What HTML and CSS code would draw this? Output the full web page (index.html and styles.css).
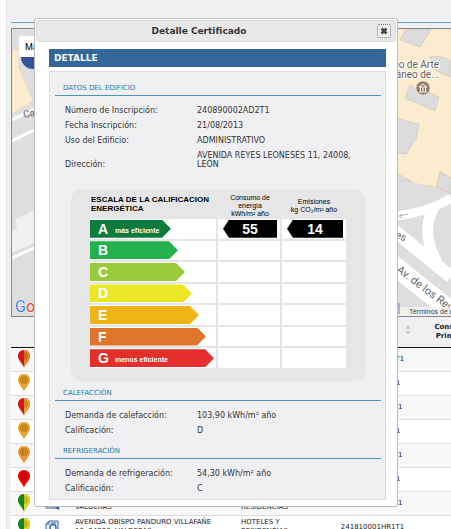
FILE: index.html
```html
<!DOCTYPE html>
<html lang="es">
<head>
<meta charset="utf-8">
<title>Detalle Certificado</title>
<link rel="stylesheet" href="styles.css">
</head>
<body>
<svg class="defs" aria-hidden="true">
  <defs>
    <clipPath id="pin-right"><rect x="7" width="7" height="18"/></clipPath>
    <path id="pin" d="M7 0C3 0 1 3 1 6.300C1 10 5 13 7 17.500C9 13 13 10 13 6.300C13 3 11 0 7 0Z"/>
    <symbol id="doc" viewBox="0 0 16 14">
      <path d="M4 1H13V12H1V4Z" fill="#dfeafa" stroke="#3a62a5"/>
      <path d="M4 1V4H1M6 3H11" fill="none" stroke="#3a62a5"/>
      <circle cx="8" cy="7.500" r="3" fill="#fff" stroke="#3a62a5" stroke-width="1.300"/>
      <path d="M10.500 10L14 13" stroke="#24448a" stroke-width="2"/>
    </symbol>
  </defs>
</svg>
<main class="page">
  <header class="page-head"></header>
  <section class="map">
    <svg class="map-art" viewBox="12 29 439 287" preserveAspectRatio="xMinYMin slice">
      <rect x="12" y="29" width="439" height="287" fill="#dedede"/>
      <path d="M390 29H451V178L440 171L436 187L418 184L390 172Z" fill="#fbecd0" stroke="#e9d5ae" stroke-width=".6"/>
      <path d="M12 51L19 49V68L33 101L12 114Z" fill="#fbecd0" stroke="#e9d5ae" stroke-width=".6"/>
      <g fill="#dcdcdc" stroke="#cbc4b6" stroke-width=".6">
        <path d="M406 29H431L428 35L420 47L400 40Z"/>
        <path d="M430 57Q442 55 451 61V77Q442 75 434 69Z"/>
        <path d="M410 85L418 90L429 92L439 97L435 111L405 98Z"/>
        <path d="M390 115L405 121L419 124L416 139L406 154L390 152Z"/>
        <path d="M390 171L402 176L411 181H390Z"/>
        <path d="M440 172L451 178V194L437 187Z"/>
      </g>
      <path d="M12 120L34 109M12 141L34 130" stroke="#fff" stroke-width="3"/>
      <path d="M12 236V232L17 228L15 220L34 210V243L12 253Z" fill="#f0f0f0"/>
      <path d="M12 258L34 248" stroke="#fff" stroke-width="3"/>
      <g fill="none" stroke="#fff">
        <path d="M390 217Q430 212 451 198" stroke-width="9"/>
        <path d="M390 227L451 277" stroke-width="13"/>
        <path d="M434 208Q420 231 437 262" stroke-width="11"/>
        <path d="M390 262L451 311" stroke-width="19"/>
      </g>
      <path d="M399 216L408 214M402 214L399 216L402 218" stroke="#aab2c8" fill="none"/>
      <circle cx="33" cy="57" r="12" fill="#34519c"/>
      <circle cx="423" cy="88" r="7" fill="#977767" stroke="#fff" stroke-width=".5"/>
      <path d="M419 87L423 84L427 87ZM419 92H427M420.500 87V91.500M423 88V91.500M425.500 87V91.500" fill="none" stroke="#fff"/>
      <g class="map-text">
        <text x="24" y="118" transform="rotate(-12 24 118)">Calle</text>
        <g class="map-place"><text x="439" y="68" text-anchor="end">Museo de Arte</text>
        <text x="439" y="78" text-anchor="end">Contemporáneo de...</text></g>
        <text x="395" y="237" transform="rotate(25 395 237)">es</text>
        <text class="map-street" x="396" y="271" transform="rotate(37 396 271)">Av. de los Reyes</text>
      </g>
      <rect x="390" y="307" width="61" height="9" fill="#f4f4f4" opacity=".8"/>
      <text class="map-terms" x="409" y="314">Términos de uso</text>
      <path d="M399 303V314" stroke="#7474bd"/>
      <text class="map-logo" x="15" y="312"><tspan fill="#4285f4">G</tspan><tspan fill="#ea4335">o</tspan><tspan fill="#fbbc05">o</tspan></text>
    </svg>
    <button class="map-type" type="button">Mapa</button>
  </section>

  <table class="results">
    <colgroup><col class="c-pin"><col class="c-doc"><col class="c-address"><col class="c-use"><col class="c-code"><col class="c-energy"></colgroup>
    <thead>
      <tr><th></th><th></th><th></th><th></th><th class="sortable"><svg class="sort" viewBox="0 0 6 10"><path d="M0 4L3 0L6 4ZM0 6H6L3 10Z" fill="#ccc"/></svg></th><th>Consumo<br>Primaria</th></tr>
    </thead>
    <tbody>
      <tr><td><svg class="pin" viewBox="0 0 14 18"><use href="#pin" fill="#d5141c"/><use href="#pin" fill="#e58a2b" clip-path="url(#pin-right)"/><path d="M7 2A4 4 0 0 1 7 10Z" fill="#c86b20"/></svg></td><td></td><td></td><td></td><td>240890002AD2T1</td><td></td></tr>
      <tr><td><svg class="pin" viewBox="0 0 14 18"><use href="#pin" fill="#eaa431"/><circle cx="7" cy="6" r="4" fill="#c98a1e"/></svg></td><td></td><td></td><td></td><td>241810001VI11</td><td></td></tr>
      <tr><td><svg class="pin" viewBox="0 0 14 18"><use href="#pin" fill="#d5141c"/><use href="#pin" fill="#eaa431" clip-path="url(#pin-right)"/><path d="M7 2A4 4 0 0 1 7 10Z" fill="#c98a1e"/></svg></td><td></td><td></td><td></td><td>241810001VI1T1</td><td></td></tr>
      <tr><td><svg class="pin" viewBox="0 0 14 18"><use href="#pin" fill="#eaa431"/><circle cx="7" cy="6" r="4" fill="#c98a1e"/></svg></td><td></td><td></td><td></td><td>241810001VI11</td><td></td></tr>
      <tr><td><svg class="pin" viewBox="0 0 14 18"><use href="#pin" fill="#eb9834"/><circle cx="7" cy="6" r="4" fill="#cc7420"/><path d="M7 2A4 4 0 0 1 7 10Z" fill="#c98a1e"/></svg></td><td></td><td></td><td></td><td>241810001VI1T1</td><td></td></tr>
      <tr><td><svg class="pin" viewBox="0 0 14 18"><use href="#pin" fill="#ef0707"/><circle cx="7" cy="6" r="4" fill="#d50303"/></svg></td><td></td><td></td><td></td><td>241810001VI11</td><td></td></tr>
      <tr><td><svg class="pin" viewBox="0 0 14 18"><use href="#pin" fill="#15851e"/><use href="#pin" fill="#e3d52b" clip-path="url(#pin-right)"/><path d="M7 2A4 4 0 0 1 7 10Z" fill="#bfb51d"/></svg></td><td><svg class="doc"><use href="#doc"/></svg></td><td class="text">CALLE MAYOR 1, 24220,<br>VALDERAS</td><td class="text">HOTELES Y<br>RESIDENCIAS</td><td>241810001VI1T1</td><td></td></tr>
      <tr><td><svg class="pin" viewBox="0 0 14 18"><use href="#pin" fill="#15851e"/><use href="#pin" fill="#e3d52b" clip-path="url(#pin-right)"/><path d="M7 2A4 4 0 0 1 7 10Z" fill="#bfb51d"/></svg></td><td><svg class="doc"><use href="#doc"/></svg></td><td class="text">AVENIDA OBISPO PANDURO VILLAFAÑE<br>13, 24220, VALDERAS</td><td class="text">HOTELES Y<br>RESIDENCIAS</td><td>241810001HR1T1</td><td></td></tr>
    </tbody>
  </table>
</main>

<div class="dialog" role="dialog" aria-labelledby="dialog-title">
  <div class="dialog-bar">
    <h1 id="dialog-title" class="dialog-title">Detalle Certificado</h1>
    <button class="close" type="button" aria-label="Cerrar"><svg viewBox="0 0 8 8" class="close-icon"><path d="M1.500 1.500L6.500 6.500M6.500 1.500L1.500 6.500" stroke="#444" stroke-width="2.500"/></svg></button>
  </div>
  <div class="dialog-body">
    <h2 class="banner">DETALLE</h2>
    <div class="panel">
      <section>
        <h3 class="section-title">DATOS DEL EDIFICIO</h3>
        <dl class="fields">
          <dt>Número de Inscripción:</dt><dd>240890002AD2T1</dd>
          <dt>Fecha Inscripción:</dt><dd>21/08/2013</dd>
          <dt>Uso del Edificio:</dt><dd>ADMINISTRATIVO</dd>
          <dt>Dirección:</dt><dd class="address">AVENIDA REYES LEONESES 11, 24008, LEÓN</dd>
        </dl>
      </section>
      <div class="energy">
        <table class="scale">
          <colgroup><col class="s-scale"><col class="s-value"><col class="s-value"></colgroup>
          <thead><tr><th class="scale-title">ESCALA DE LA CALIFICACION ENERGÉTICA</th><th>Consumo de<br>energía<br>kWh/m² año</th><th>Emisiones<br>kg CO₂/m² año</th></tr></thead>
          <tbody>
            <tr><td><div class="arrow a"><b>A</b><span>más eficiente</span></div></td><td><div class="tag">55</div></td><td><div class="tag">14</div></td></tr>
            <tr><td><div class="arrow b"><b>B</b></div></td><td></td><td></td></tr>
            <tr><td><div class="arrow c"><b>C</b></div></td><td></td><td></td></tr>
            <tr><td><div class="arrow d"><b>D</b></div></td><td></td><td></td></tr>
            <tr><td><div class="arrow e"><b>E</b></div></td><td></td><td></td></tr>
            <tr><td><div class="arrow f"><b>F</b></div></td><td></td><td></td></tr>
            <tr><td><div class="arrow g"><b>G</b><span>menos eficiente</span></div></td><td></td><td></td></tr>
          </tbody>
        </table>
      </div>
      <section>
        <h3 class="section-title">CALEFACCIÓN</h3>
        <dl class="fields">
          <dt>Demanda de calefacción:</dt><dd>103,90 kWh/m² año</dd>
          <dt>Calificación:</dt><dd>D</dd>
        </dl>
      </section>
      <section>
        <h3 class="section-title">REFRIGERACIÓN</h3>
        <dl class="fields">
          <dt>Demanda de refrigeración:</dt><dd>54,30 kWh/m² año</dd>
          <dt>Calificación:</dt><dd>C</dd>
        </dl>
      </section>
    </div>
  </div>
</div>
</body>
</html>
```
FILE: styles.css
```css
* { box-sizing: border-box; }
html { height: 100%; }
body {
  position: relative;
  height: 100%;
  margin: 0;
  overflow: hidden;
  background: #fff;
  color: #333;
  font: 8px/9px "DejaVu Sans", sans-serif;
}
h1, h2, h3, dl, dd { margin: 0; }
button { padding: 0; font: inherit; }
.defs { position: absolute; width: 0; height: 0; }

/* Page behind the dialog */
.page {
  height: 100%;
  margin-left: 6px;
  padding-left: 4px;
  overflow: hidden;
  border-left: 1px solid #e2e2e4;
  background: #f0f0f2;
}
.page-head { height: 23px; border-bottom: 1px solid #5fa8d5; }
.map {
  position: relative;
  height: 289px;
  margin-top: 5px;
  border: 1px solid #888;
  border-width: 1px 0 1px 1px;
}
.map-art { display: block; width: 100%; height: 287px; }
.map-type {
  position: absolute;
  top: 7px;
  left: 7px;
  width: 50px;
  height: 21px;
  padding-left: 6px;
  border: 0;
  border-radius: 2px;
  background: #fff;
  font: 9px Roboto, sans-serif;
  text-align: left;
}
.map-text { font: 10px Roboto, sans-serif; fill: #666; }
.map-place { fill: #6b5c55; stroke: #fff; stroke-width: 2px; paint-order: stroke; }
.map-street { font-size: 11px; }
.map-terms { font: 7px Roboto, sans-serif; fill: #444; }
.map-logo { font: 16px Roboto, sans-serif; stroke: #fff; stroke-width: 1px; paint-order: stroke; }

.results {
  width: 100%;
  min-width: 480px;
  table-layout: fixed;
  border-collapse: collapse;
  background: #fff;
  color: #222;
  font-size: 7px;
  line-height: 9px;
}
.results th { height: 30px; padding: 0; background: #f0f0f2; border-bottom: 1px solid #111; }
.results td { height: 24px; padding: 0; border-bottom: 1px solid #ddd; text-align: center; }
.results tbody tr:nth-child(odd) { background: #f7f7f7; }
.results .text { text-align: left; white-space: nowrap; }
.results .sortable { padding-right: 3px; text-align: right; }
.c-pin { width: 26px; }
.c-doc { width: 38px; }
.c-address { width: 166px; }
.c-use { width: 90px; }
.c-code { width: 83px; }
.pin { display: block; width: 14px; height: 18px; margin: 0 auto; }
.doc { display: block; width: 16px; height: 14px; margin-left: 8px; }
.sort { width: 6px; height: 10px; }

/* Dialog */
.dialog {
  position: absolute;
  top: 18px;
  left: 34px;
  right: 53px;
  padding: 1px;
  border: 1px solid #bbb;
  border-radius: 3px;
  background: #fff;
}
.dialog-bar {
  display: flex;
  align-items: center;
  height: 22px;
  padding: 0 4px 0 0;
  border: 1px solid #ddd;
  border-radius: 3px;
  background: #e8e8e8;
}
.dialog-title { flex: 1; padding-right: 16px; font-size: 9px; line-height: 12px; text-align: center; }
.close {
  display: flex;
  align-items: center;
  justify-content: center;
  width: 14px;
  height: 14px;
  border: 1px dotted #777;
  border-radius: 2px;
  background: #f1f1f1;
}
.close-icon { width: 8px; height: 8px; }
.dialog-body { padding: 7px 10px 5px 13px; }
.banner {
  height: 18px;
  padding-left: 5px;
  background: #336699;
  color: #fff;
  font-size: 9px;
  line-height: 18px;
}
.panel {
  margin-top: 4px;
  padding: 10px 4px 3px 5px;
  border: 1px solid #dcdcde;
  background: #f0f0f2;
}
.section-title {
  height: 14px;
  padding-left: 8px;
  border-bottom: 1px solid #4a94c4;
  color: #2a76aa;
  font-size: 7px;
  font-weight: 400;
  line-height: 12px;
}
section + section { margin-top: 7px; }
.fields {
  display: grid;
  grid-template-columns: 132px 1fr;
  padding: 7px 0 0 10px;
  line-height: 15px;
}
.fields dt { align-self: end; }
.fields .address { padding: 3px 24px 3px 0; line-height: 9px; }

/* Energy scale */
.energy {
  margin: 17px 16px 6px;
  padding: 0 19px 11px;
  border-radius: 11px;
  background: #e6e6e7;
}
.scale {
  width: 100%;
  table-layout: fixed;
  border-collapse: separate;
  border-spacing: 0;
  color: #000;
  font-family: "Liberation Sans", sans-serif;
}
.s-scale { width: 50%; }
.s-value { width: 25%; }
.scale th { height: 30px; padding: 3px 0 0; font-size: 7px; font-weight: 400; line-height: 8px; }
.scale .scale-title { padding: 0 8px 0 1px; font-size: 8px; font-weight: 700; line-height: 9px; text-align: left; }
.scale tbody { height: 151px; }
.scale td { padding: 0; border: solid #e6e6e7; border-width: 0 2px 2px 0; background: #fff; }
.scale td:last-child { border-right: 0; }
.arrow {
  display: flex;
  align-items: center;
  height: 18px;
  padding-left: 8px;
  clip-path: polygon(0 0, calc(100% - 9px) 0, 100% 50%, calc(100% - 9px) 100%, 0 100%);
  color: #fff;
}
.arrow b { width: 17px; font-size: 14px; line-height: 16px; }
.arrow span { padding-top: 3px; font-size: 7px; font-weight: 700; white-space: nowrap; }
.a { width: 81px; background: #0d7a3e; }
.b { width: 88px; background: #22b14c; }
.c { width: 95px; background: #9aca3c; }
.d { width: 102px; background: #ece827; }
.e { width: 109px; background: #f0b419; }
.f { width: 116px; background: #de752b; }
.g { width: 124px; background: #e42f2d; }
.tag {
  height: 18px;
  margin: 0 3px 0 5px;
  clip-path: polygon(6px 0, 100% 0, 100% 100%, 6px 100%, 0 50%);
  background: #000;
  color: #fff;
  font-size: 14px;
  font-weight: 700;
  line-height: 19px;
  text-align: center;
}
```
